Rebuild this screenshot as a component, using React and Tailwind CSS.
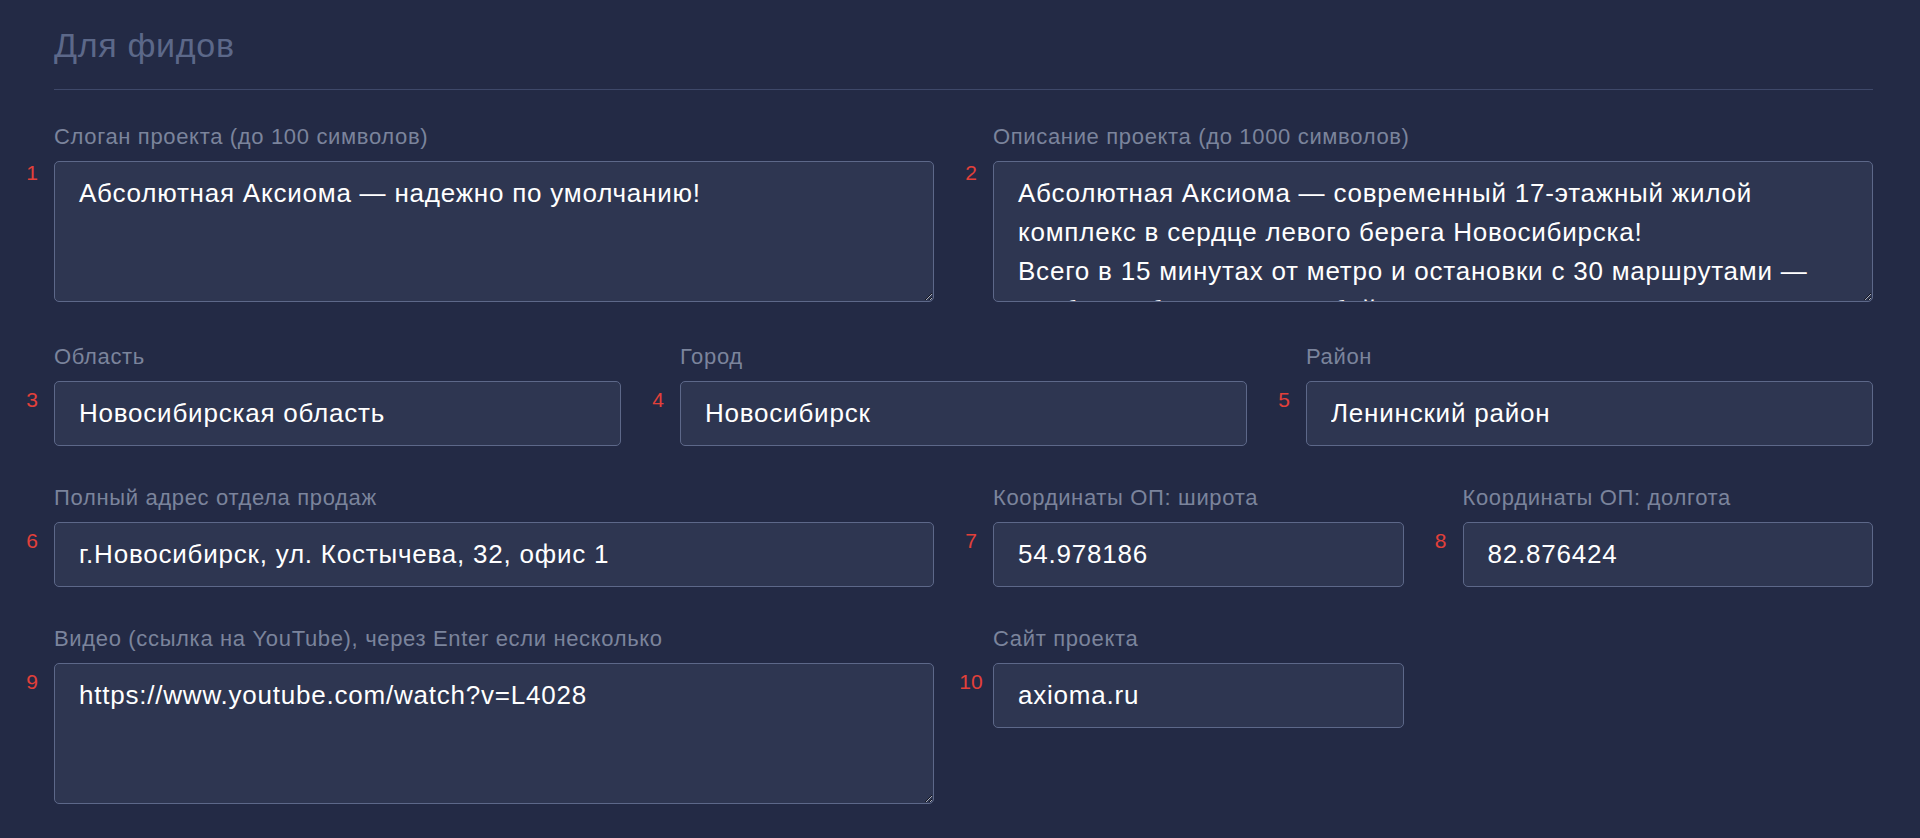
import React from 'react';

const font = { fontFamily: '"Liberation Sans", Arial, sans-serif' };

const description =
  'Абсолютная Аксиома — современный 17-этажный жилой комплекс в сердце левого берега Новосибирска!\nВсего в 15 минутах от метро и остановки с 30 маршрутами — удобно добираться в любой конец города.';

const rows = [
  [
    { n: 1, label: 'Слоган проекта (до 100 символов)', value: 'Абсолютная Аксиома — надежно по умолчанию!', area: true, span: 'col-span-6', top: 'top-[1px]' },
    { n: 2, label: 'Описание проекта (до 1000 символов)', value: description, area: true, span: 'col-span-6', top: 'top-[1px]' },
  ],
  [
    { n: 3, label: 'Область', value: 'Новосибирская область', span: 'col-span-4' },
    { n: 4, label: 'Город', value: 'Новосибирск', span: 'col-span-4' },
    { n: 5, label: 'Район', value: 'Ленинский район', span: 'col-span-4' },
  ],
  [
    { n: 6, label: 'Полный адрес отдела продаж', value: 'г.Новосибирск, ул. Костычева, 32, офис 1', span: 'col-span-6' },
    { n: 7, label: 'Координаты ОП: широта', value: '54.978186', span: 'col-span-3' },
    { n: 8, label: 'Координаты ОП: долгота', value: '82.876424', span: 'col-span-3' },
  ],
  [
    { n: 9, label: 'Видео (ссылка на YouTube), через Enter если несколько', value: 'https://www.youtube.com/watch?v=L4028', area: true, span: 'col-span-6' },
    { n: 10, label: 'Сайт проекта', value: 'axioma.ru', span: 'col-span-3' },
  ],
];

// отступы между рядами
const rowGap = ['', 'mt-[38px]', 'mt-[35px]', 'mt-[35px]'];

const boxCls =
  'block w-full rounded-[5px] border border-[#5d6889] bg-[#2e3651] px-6 py-3 text-[26px] leading-[39px] tracking-[0.03em] text-white outline-none';

function Field({ f }) {
  return (
    <div className={f.span}>
      <div className="mb-[8px] text-[22px] leading-[33px] tracking-[0.03em] text-[#7b849c]">{f.label}</div>
      <div className="relative">
        <span className={`absolute left-[-35px] w-[26px] text-center text-[21px] leading-none text-[#e2403a] ${f.top || 'top-[8px]'}`}>
          {f.n}
        </span>
        {f.area ? (
          <textarea
            readOnly
            value={f.value}
            className={`${boxCls} h-[141px] resize overflow-hidden scheme-dark`}
            style={font}
          />
        ) : (
          <input readOnly value={f.value} className={`${boxCls} h-[65px]`} style={font} />
        )}
      </div>
    </div>
  );
}

export default function App() {
  return (
    <div className="min-h-screen bg-[#232a45]" style={font}>
      <div className="w-[1873px] pl-[54px] pt-[25px]">
        <h2 className="text-[34px] leading-[40px] tracking-[0.02em] text-[#5c6889]">Для фидов</h2>
        <div className="mt-[24px] h-px bg-[#3e4869]" />

        <div className="mt-[30px]">
          {rows.map((row, i) => (
            <div key={i} className={`grid grid-cols-12 gap-x-[59px] ${rowGap[i]}`}>
              {row.map((f) => (
                <Field key={f.n} f={f} />
              ))}
            </div>
          ))}
        </div>
      </div>
    </div>
  );
}
